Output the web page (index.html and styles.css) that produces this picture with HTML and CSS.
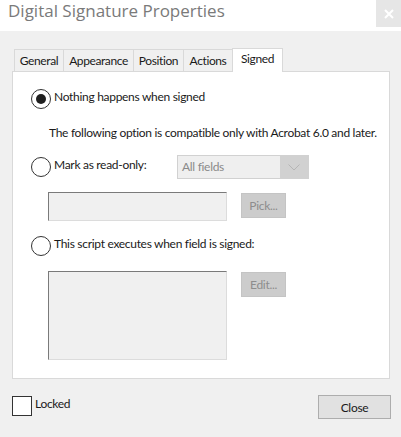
FILE: index.html
```html
<!DOCTYPE html>
<html>
<head>
<meta charset="utf-8">
<link rel="stylesheet" href="styles.css">
</head>
<body>
<div class="titlebar">
  <div class="title">Digital Signature Properties</div>
  <div class="xbtn"><svg width="10" height="10" viewBox="0 0 10 10"><path d="M1 1L9 9M9 1L1 9" stroke="#fff" stroke-width="2"/></svg></div>
</div>
<div class="content">
  <div class="tabs">
    <div class="tab t1">General</div>
    <div class="tab t2">Appearance</div>
    <div class="tab t3">Position</div>
    <div class="tab t4">Actions</div>
    <div class="tab t5 sel">Signed</div>
  </div>
  <div class="panel">
    <div class="row r1"><span class="radio on"></span><span class="lbl">Nothing happens when signed</span></div>
    <div class="note">The following option is compatible only with Acrobat 6.0 and later.</div>
    <div class="row r2"><span class="radio"></span><span class="lbl w1">Mark as read-only:</span>
      <div class="select"><span class="sfield">All fields</span><span class="sarrow"><svg width="12" height="7" viewBox="0 0 12 7"><path d="M0.5 0.5L6 6L11.5 0.5" fill="none" stroke="#b5b5b5" stroke-width="1"/></svg></span></div>
    </div>
    <div class="frow f1"><div class="field small"></div><div class="btn">Pick...</div></div>
    <div class="row r3"><span class="radio"></span><span class="lbl">This script executes when field is signed:</span></div>
    <div class="frow f2"><div class="field big"></div><div class="btn">Edit...</div></div>
  </div>
  <div class="footer">
    <div class="check"><span class="box"></span><span class="clbl">Locked</span></div>
    <div class="close">Close</div>
  </div>
</div>
</body>
</html>
```
FILE: styles.css
```css
* { box-sizing: border-box; }
html, body { margin: 0; padding: 0; }
body {
  width: 401px; height: 437px; overflow: hidden;
  background: #f0f0f0;
  font-family: "Lato", "Open Sans", sans-serif;
  font-size: 12px; letter-spacing: -0.3px; color: #1a1a1a;
  white-space: nowrap;
}
.titlebar {
  height: 31px; background: #fff;
  display: flex; justify-content: space-between; align-items: flex-start;
}
.title {
  font-family: "Open Sans", sans-serif; letter-spacing: 0;
  font-size: 17px; color: #7a7a7a; padding-left: 8px; line-height: 22px;
}
.xbtn {
  width: 25px; height: 27px; background: #e6e6e6;
  display: flex; align-items: center; justify-content: center;
}
.content { padding: 0 11px 0 12px; }
.tabs {
  display: flex; margin-top: 18px; padding-left: 2px; height: 22px; align-items: flex-end;
}
.tab {
  height: 22px; border: 1px solid #d9d9d9; border-bottom: none; border-left: none;
  background: #f0f0f0; line-height: 21px; text-align: center;
  color: #1a1a1a; font-size: 12px; letter-spacing: -0.4px;
}
.t1 { width: 50px; border-left: 1px solid #d9d9d9; }
.t2 { width: 70px; }
.t3 { width: 50px; }
.t4 { width: 49px; }
.tab.sel { background: #fff; height: 24px; margin-bottom: -1px; line-height: 20px; position: relative; border-left: 1px solid #d9d9d9; margin-left: -1px; width: 51px; }
.panel {
  width: 378px; height: 308px; background: #fff; border: 1px solid #d9d9d9;
  padding: 0 0 0 18px;
}
.row { display: flex; align-items: center; height: 20px; }
.r1 { margin-top: 17px; }
.radio {
  width: 20px; height: 20px; border-radius: 50%; border: 1.5px solid #333;
  display: inline-flex; align-items: center; justify-content: center; flex: none;
}
.radio.on::after { content: ""; width: 10px; height: 10px; border-radius: 50%; background: #1f1f1f; }
.lbl { margin-left: 3px; line-height: 16px; margin-top: -4px; }
.w1 { width: 123px; }
.note { margin-top: 15px; padding-left: 18px; height: 18px; line-height: 18px; }
.r2 { margin-top: 15px; }
.select {
  width: 132px; height: 24px; background: #d1d1d1; display: flex; padding: 1px;
}
.sfield { width: 102px; height: 22px; background: #efefef; color: #8a8a8a; padding-left: 4px; line-height: 22px; }
.sarrow { flex: 1; display: flex; align-items: center; justify-content: center; padding-top: 1px; }
.frow { display: flex; padding-left: 17px; }
.f1 { margin-top: 15px; }
.f2 { margin-top: 15px; }
.field {
  width: 179px; background: #f0f0f0;
  border-top: 1px solid #7a7a7a; border-left: 1px solid #7a7a7a;
  border-right: 1px solid #dcdcdc; border-bottom: 1px solid #dcdcdc;
}
.small { height: 29px; }
.big { height: 89px; }
.btn {
  margin-left: 14px; width: 45px; height: 25px; background: #cccccc; border: 1px solid #c4c4c4;
  color: #8d8d8d; text-align: center; line-height: 23px; margin-top: 1px;
}
.r3 { margin-top: 15px; }
.footer { display: flex; justify-content: space-between; margin-top: 16px; align-items: flex-start; }
.check { display: flex; align-items: flex-start; margin-top: 1px; }
.box { width: 20px; height: 20px; border: 1px solid #333; background: #fff; }
.clbl { margin-left: 3px; line-height: 16px; }
.close {
  width: 73px; height: 24px; background: #e1e1e1; border: 1px solid #adadad;
  text-align: center; line-height: 23px; margin-right: -1px; color: #1a1a1a;
}
```
